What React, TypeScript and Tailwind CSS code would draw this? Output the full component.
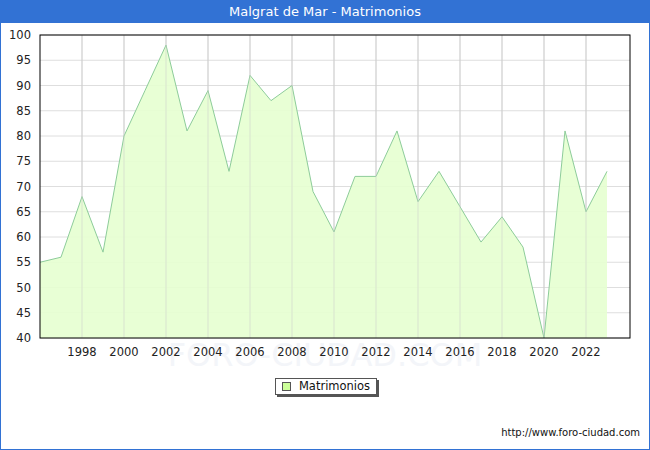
const data = [55, 56, 68, 57, 80, 89, 98, 81, 89, 73, 92, 87, 90, 69, 61, 72, 72, 81, 67, 73, 66, 59, 64, 58, 40, 81, 65, 73]

const X0 = 40
const X1 = 630
const Y0 = 35
const Y1 = 338
const xs = (i: number) => X0 + i * 21
const ys = (v: number) => Y1 - ((v - 40) / 60) * (Y1 - Y0)

export default function App() {
  const pts = data.map((v, i) => `${xs(i)},${ys(v)}`).join(" ")
  const area = `${xs(0)},${Y1} ${pts} ${xs(data.length - 1)},${Y1}`
  const yTicks = Array.from({ length: 13 }, (_, i) => 40 + i * 5)
  const years = Array.from({ length: 13 }, (_, i) => 1998 + i * 2)

  return (
    <div className="w-[650px] h-[450px] border border-[#3272d4] bg-white flex flex-col" style={{ fontFamily: "'DejaVu Sans', sans-serif" }}>
      <div className="h-[22px] bg-[#3272d4] text-white text-[13px] flex items-center justify-center shrink-0">
        Malgrat de Mar - Matrimonios
      </div>
      <svg width="648" height="345" viewBox="1 23 648 345" className="block shrink-0">
        <text x="325" y="366" textAnchor="middle" fontSize="32" fill="#f3f5f9" fontFamily="'DejaVu Sans', sans-serif">FORO-CIUDAD.COM</text>
        {yTicks.map((v) => (
          <line key={v} x1={X0} x2={X1} y1={ys(v)} y2={ys(v)} stroke="#dedede" />
        ))}
        {years.map((y) => (
          <line key={y} x1={xs(y - 1996)} x2={xs(y - 1996)} y1={Y0} y2={Y1} stroke="#cfcfcf" />
        ))}
        <polygon points={area} fill="#e6ffd0" fillOpacity="0.9" />
        <polyline points={pts} fill="none" stroke="#8dcc9a" strokeWidth="1" />
        {years.map((y) => (
          <line key={"g" + y} x1={xs(y - 1996)} x2={xs(y - 1996)} y1={Y0} y2={Y1} stroke="#cfcfcf" strokeOpacity="0.5" />
        ))}
        <rect x={X0} y={Y0} width={X1 - X0} height={Y1 - Y0} fill="none" stroke="#000" />
        {yTicks.map((v) => (
          <text key={"t" + v} x={31} y={ys(v) + 4} textAnchor="end" fontSize="11.5" fill="#222">{v}</text>
        ))}
        {years.map((y) => (
          <text key={"l" + y} x={xs(y - 1996)} y={356} textAnchor="middle" fontSize="11.5" fill="#222">{y}</text>
        ))}
      </svg>
      <div className="flex justify-center mt-[10px] pl-[2px]">
        <div className="flex items-center gap-[8px] border border-[#555] bg-white px-[6px] h-[17px] text-[11.5px] text-[#111] shadow-[2px_2px_0_#555]">
          <span className="w-[9px] h-[9px] bg-[#ccff99] border border-[#555]" />
          Matrimonios
        </div>
      </div>
      <div className="mt-auto mb-[9px] mr-[9px] text-right text-[10px] text-[#111]">http://www.foro-ciudad.com</div>
    </div>
  )
}
